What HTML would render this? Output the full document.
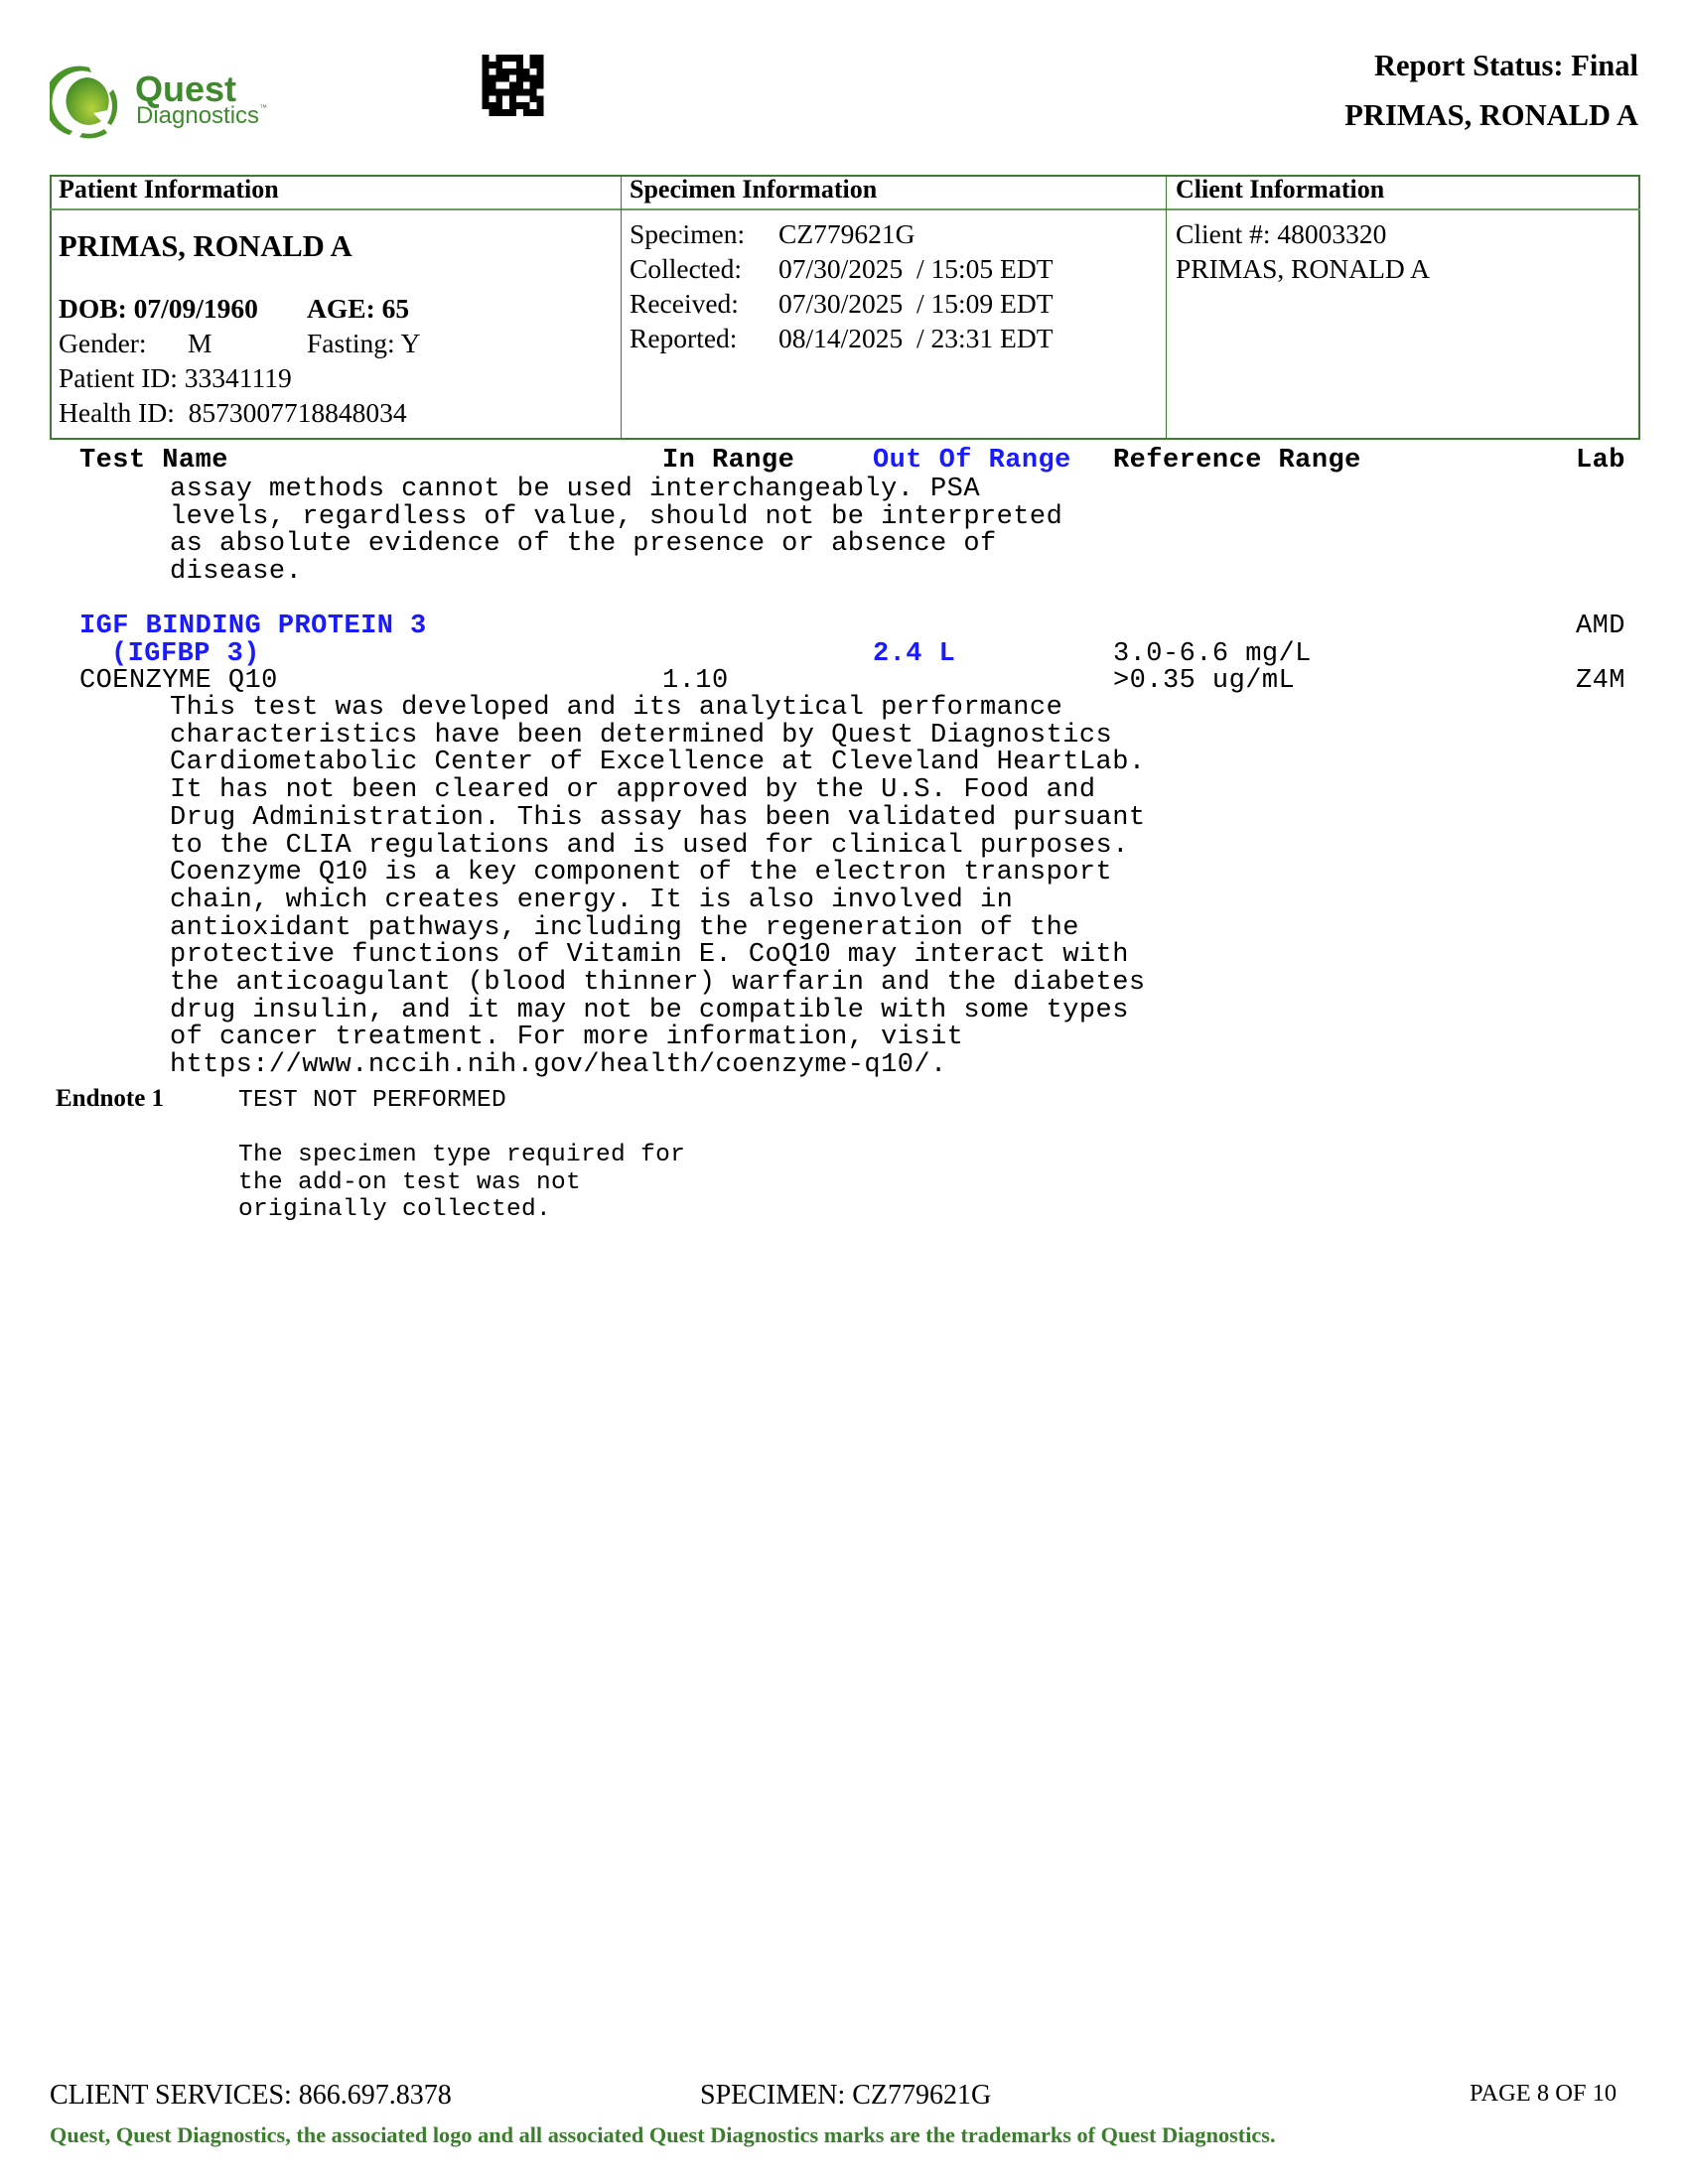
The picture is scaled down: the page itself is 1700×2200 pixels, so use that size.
<!DOCTYPE html>
<html><head><meta charset="utf-8"><style>
*{margin:0;padding:0;box-sizing:border-box}
body{width:1700px;height:2200px;background:#fff;position:relative;overflow:hidden;font-family:"Liberation Serif",serif;color:#000}
.a{position:absolute;white-space:pre;line-height:1}
.s{font-family:"Liberation Serif",serif;font-size:27.5px}
.b{font-weight:bold}
.m{font-family:"Liberation Mono",monospace;font-size:27px;letter-spacing:0.45px}
.blue{color:#1a1aff}
.g{color:#3a7d2c}
</style></head><body>
<!-- logo -->
<svg class="a" style="left:50px;top:64px" width="80" height="78" viewBox="0 0 80 78">
<defs><radialGradient id="gr" cx="0.6" cy="0.65" r="0.7"><stop offset="0" stop-color="#b5d33a"/><stop offset="1" stop-color="#3e8a26"/></radialGradient></defs>
<path d="M37 14 A23 24 0 1 0 52 58 L44 50 L58 47 A23 24 0 0 0 37 14Z" fill="url(#gr)"/>
<path d="M40 4 A34 34 0 0 0 20 72 L23 68 A29 30 0 0 1 42 9Z" fill="#4a9428"/>
<path d="M64 26 A34 34 0 0 1 62 62 L58 60 A29 30 0 0 0 60 30Z" fill="#4a9428"/>
<path d="M30 74 A34 34 0 0 0 58 70 L55 66 A29 30 0 0 1 33 70Z" fill="#4a9428"/>
</svg>
<div class="a g" style="left:136px;top:72px;font-family:'Liberation Sans',sans-serif;font-size:36px;font-weight:bold;color:#3e8a2c">Quest</div>
<div class="a" style="left:137px;top:105px;font-family:'Liberation Sans',sans-serif;font-size:24px;color:#3e8a2c">Diagnostics<span style="font-size:8px;vertical-align:top">™</span></div>
<!-- QR -->
<svg class="a" style="left:485px;top:55px" width="63" height="62" viewBox="0 0 9 9" shape-rendering="crispEdges">
<rect width="9" height="9" fill="#000"/>
<g fill="#fff"><rect x="1" y="0" width="1" height="1"/><rect x="3" y="1" width="2" height="1"/><rect x="6" y="0" width="1" height="2"/><rect x="1" y="2" width="1" height="1"/><rect x="4" y="3" width="1" height="1"/><rect x="7" y="2" width="1" height="1"/><rect x="2" y="4" width="2" height="1"/><rect x="6" y="4" width="1" height="1"/><rect x="1" y="6" width="1" height="1"/><rect x="3" y="6" width="1" height="2"/><rect x="5" y="6" width="2" height="1"/><rect x="7" y="7" width="1" height="1"/><rect x="0" y="8" width="1" height="1"/><rect x="5" y="8" width="1" height="1"/><rect x="8" y="5" width="1" height="1"/></g>
</svg>
<div class="a b" style="right:50px;top:51px;font-size:30.5px">Report Status: Final</div>
<div class="a b" style="right:50px;top:101px;font-size:30.5px">PRIMAS, RONALD A</div>
<!-- table -->
<div class="a" style="left:50px;top:176px;width:1602px;height:267px;border:2px solid #3a7d2c"></div>
<div class="a" style="left:50px;top:210px;width:1602px;height:2px;background:#6a9e5c"></div>
<div class="a" style="left:625px;top:176px;width:1px;height:267px;background:#3a7d2c"></div>
<div class="a" style="left:1174px;top:176px;width:1px;height:267px;background:#3a7d2c"></div>
<div class="a s b" style="left:59px;top:178px;font-size:26px">Patient Information</div>
<div class="a s b" style="left:634px;top:178px;font-size:26px">Specimen Information</div>
<div class="a s b" style="left:1184px;top:178px;font-size:26px">Client Information</div>
<div class="a b" style="left:59px;top:233px;font-size:30.5px">PRIMAS, RONALD A</div>
<div class="a s b" style="left:59px;top:297px">DOB: 07/09/1960</div>
<div class="a s b" style="left:309px;top:297px">AGE: 65</div>
<div class="a s" style="left:59px;top:332px">Gender:</div>
<div class="a s" style="left:189px;top:332px">M</div>
<div class="a s" style="left:309px;top:332px">Fasting: Y</div>
<div class="a s" style="left:59px;top:367px">Patient ID: 33341119</div>
<div class="a s" style="left:59px;top:402px">Health ID:  8573007718848034</div>
<div class="a s" style="left:634px;top:222px">Specimen:</div><div class="a s" style="left:784px;top:222px">CZ779621G</div>
<div class="a s" style="left:634px;top:257px">Collected:</div><div class="a s" style="left:784px;top:257px">07/30/2025  / 15:05 EDT</div>
<div class="a s" style="left:634px;top:292px">Received:</div><div class="a s" style="left:784px;top:292px">07/30/2025  / 15:09 EDT</div>
<div class="a s" style="left:634px;top:327px">Reported:</div><div class="a s" style="left:784px;top:327px">08/14/2025  / 23:31 EDT</div>
<div class="a s" style="left:1184px;top:222px">Client #: 48003320</div>
<div class="a s" style="left:1184px;top:257px">PRIMAS, RONALD A</div>
<!-- results -->
<div class="a m b" style="left:80px;top:451px">Test Name</div>
<div class="a m b" style="left:667px;top:451px">In Range</div>
<div class="a m b blue" style="left:879px;top:451px">Out Of Range</div>
<div class="a m b" style="left:1121px;top:451px">Reference Range</div>
<div class="a m b" style="left:1587px;top:451px">Lab</div>
<div class="a m" style="left:171px;top:480px;line-height:27.6px">assay methods cannot be used interchangeably. PSA
levels, regardless of value, should not be interpreted
as absolute evidence of the presence or absence of
disease.</div>
<div class="a m b blue" style="left:80px;top:618px">IGF BINDING PROTEIN 3</div>
<div class="a m" style="left:1587px;top:618px">AMD</div>
<div class="a m b blue" style="left:112px;top:646px">(IGFBP 3)</div>
<div class="a m b blue" style="left:879px;top:646px">2.4 L</div>
<div class="a m" style="left:1121px;top:646px">3.0-6.6 mg/L</div>
<div class="a m" style="left:80px;top:673px">COENZYME Q10</div>
<div class="a m" style="left:667px;top:673px">1.10</div>
<div class="a m" style="left:1121px;top:673px">&gt;0.35 ug/mL</div>
<div class="a m" style="left:1587px;top:673px">Z4M</div>
<div class="a m" style="left:171px;top:700px;line-height:27.7px">This test was developed and its analytical performance
characteristics have been determined by Quest Diagnostics
Cardiometabolic Center of Excellence at Cleveland HeartLab.
It has not been cleared or approved by the U.S. Food and
Drug Administration. This assay has been validated pursuant
to the CLIA regulations and is used for clinical purposes.
Coenzyme Q10 is a key component of the electron transport
chain, which creates energy. It is also involved in
antioxidant pathways, including the regeneration of the
protective functions of Vitamin E. CoQ10 may interact with
the anticoagulant (blood thinner) warfarin and the diabetes
drug insulin, and it may not be compatible with some types
of cancer treatment. For more information, visit
https://www.nccih.nih.gov/health/coenzyme-q10/.</div>
<div class="a b" style="left:56px;top:1094px;font-size:25px">Endnote 1</div>
<div class="a m" style="left:240px;top:1095px;font-size:24.5px;letter-spacing:0.3px;line-height:27.6px">TEST NOT PERFORMED

The specimen type required for
the add-on test was not
originally collected.</div>
<!-- footer -->
<div class="a s" style="left:50px;top:2097px;font-size:28px">CLIENT SERVICES: 866.697.8378</div>
<div class="a s" style="left:705px;top:2097px;font-size:28px">SPECIMEN: CZ779621G</div>
<div class="a s" style="left:1480px;top:2097px;font-size:24.5px">PAGE 8 OF 10</div>
<div class="a b g" style="left:50px;top:2140px;font-size:22.3px">Quest, Quest Diagnostics, the associated logo and all associated Quest Diagnostics marks are the trademarks of Quest Diagnostics.</div>
</body></html>
